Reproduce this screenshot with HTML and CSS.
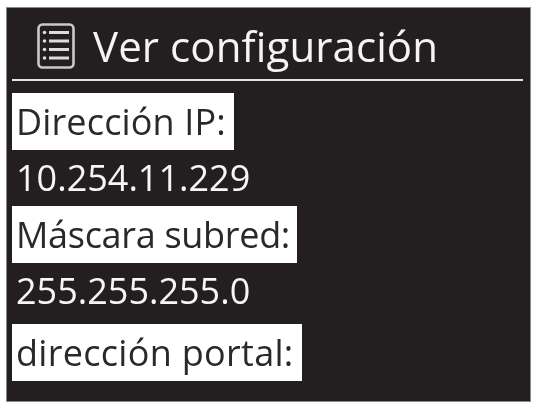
FILE: index.html
```html
<!DOCTYPE html>
<html lang="es">
<head>
<meta charset="utf-8">
<title>Ver configuración</title>
<link rel="stylesheet" href="styles.css">
</head>
<body>
<main class="screen">
  <header class="title-bar">
    <svg class="icon" viewBox="0 0 38 46" aria-hidden="true">
      <rect x="1.5" y="1.5" width="35" height="43" rx="4" fill="none" stroke="#c9c9c7" stroke-width="2.6"/>
      <g fill="#dcdcda">
        <circle cx="7.5" cy="9.5" r="1.8"/><circle cx="7.5" cy="18" r="1.8"/><circle cx="7.5" cy="26.5" r="1.8"/><circle cx="7.5" cy="35" r="1.8"/>
        <rect x="12" y="8" width="20" height="3"/><rect x="12" y="16.5" width="20" height="3"/><rect x="12" y="25" width="20" height="3"/><rect x="12" y="33.5" width="20" height="3"/>
      </g>
    </svg>
    <h1 class="title">Ver configuración</h1>
  </header>
  <div class="rows">
    <div class="label label-ip">Dirección IP:</div>
    <div class="value">10.254.11.229</div>
    <div class="label label-mask">Máscara subred:</div>
    <div class="value value-tall">255.255.255.0</div>
    <div class="label label-portal">dirección portal:</div>
  </div>
</main>
</body>
</html>
```
FILE: styles.css
```css
html, body {
  margin: 0;
  padding: 0;
  background: #fff;
}
body {
  width: 534px;
  height: 404px;
  overflow: hidden;
  font-family: "Open Sans", "Noto Sans", sans-serif;
}
.screen {
  box-sizing: border-box;
  width: 525px;
  height: 395px;
  margin: 7px 0 0 6px;
  padding: 0 7px 0 5px;
  background: #231f20;
  border: 1px solid #8a8a88;
}
.title-bar {
  box-sizing: border-box;
  height: 73px;
  display: flex;
  align-items: center;
  gap: 18px;
  padding: 5px 0 0 25px;
  border-bottom: 2px solid #e4e4e2;
}
.icon {
  width: 38px;
  height: 46px;
  flex: none;
}
.title {
  margin: 0;
  font-size: 42px;
  font-weight: 400;
  letter-spacing: 0.1px;
  color: #f4f4f2;
  line-height: 1;
  filter: blur(0.4px);
}
.rows {
  display: flex;
  flex-direction: column;
  align-items: flex-start;
  padding-top: 12px;
}
.label {
  height: 57px;
  line-height: 57px;
  padding: 0 7px 0 4px;
  background: #fff;
  color: #2b2829;
  font-size: 36px;
  filter: blur(0.3px);
}
.label-ip {
  letter-spacing: 0.15px;
  padding-right: 8px;
}
.label-mask {
  letter-spacing: -0.3px;
}
.label-portal {
  letter-spacing: 0.3px;
  padding-right: 8px;
}
.value {
  height: 56px;
  line-height: 56px;
  padding-left: 4px;
  color: #f6f6f4;
  font-size: 36px;
  font-weight: 500;
  filter: blur(0.3px);
}
.value-tall {
  height: 61px;
}
```
